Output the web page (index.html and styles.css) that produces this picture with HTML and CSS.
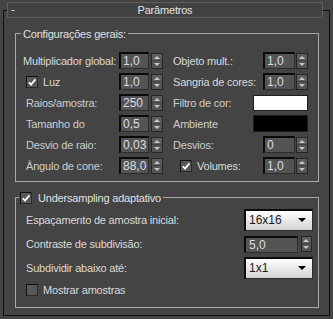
FILE: index.html
```html
<!DOCTYPE html>
<html lang="pt">
<head>
    <meta charset="UTF-8">
    <title>Parâmetros</title>
    <link rel="stylesheet" href="styles.css">
</head>
<body>
    <div class="rollout">
        <div class="rollout-head">
            <span class="collapse">-</span>
            <span class="title">Parâmetros</span>
        </div>

        <div class="group general">
            <div class="legend">Configurações gerais:</div>
            <div class="cols">
                <div class="col">
                    <div class="row first"><span class="lbl">Multiplicador global:</span><span class="num">1,0</span><span class="spin"></span></div>
                    <div class="row"><span class="check on"><svg viewBox="0 0 10 10"><path d="M1.8 5.2 L4 7.6 L8.4 2.4"/></svg></span><span class="lbl">Luz</span><span class="num">1,0</span><span class="spin"></span></div>
                    <div class="row"><span class="lbl dim">Raios/amostra:</span><span class="num">250</span><span class="spin"></span></div>
                    <div class="row"><span class="lbl dim">Tamanho do</span><span class="num">0,5</span><span class="spin"></span></div>
                    <div class="row"><span class="lbl dim">Desvio de raio:</span><span class="num">0,03</span><span class="spin"></span></div>
                    <div class="row"><span class="lbl dim">Ângulo de cone:</span><span class="num">88,0</span><span class="spin"></span></div>
                </div>
                <div class="col right">
                    <div class="row"><span class="lbl">Objeto mult.:</span><span class="num">1,0</span><span class="spin"></span></div>
                    <div class="row"><span class="lbl">Sangria de cores:</span><span class="num">1,0</span><span class="spin"></span></div>
                    <div class="row"><span class="lbl dim">Filtro de cor:</span><span class="swatch white"></span></div>
                    <div class="row"><span class="lbl dim">Ambiente</span><span class="swatch black"></span></div>
                    <div class="row"><span class="lbl dim">Desvios:</span><span class="num">0</span><span class="spin"></span></div>
                    <div class="row"><span class="check on vol"><svg viewBox="0 0 10 10"><path d="M1.8 5.2 L4 7.6 L8.4 2.4"/></svg></span><span class="lbl">Volumes:</span><span class="num">1,0</span><span class="spin"></span></div>
                </div>
            </div>
        </div>

        <div class="group adaptive">
            <div class="legend with-check"><span class="check on"><svg viewBox="0 0 10 10"><path d="M1.8 5.2 L4 7.6 L8.4 2.4"/></svg></span>Undersampling adaptativo</div>
            <div class="rows">
                <div class="arow"><span class="lbl">Espaçamento de amostra inicial:</span><span class="ctl"><span class="drop">16x16</span></span></div>
                <div class="arow"><span class="lbl">Contraste de subdivisão:</span><span class="ctl"><span class="num wide">5,0</span><span class="spin thin"></span></span></div>
                <div class="arow"><span class="lbl">Subdividir abaixo até:</span><span class="ctl"><span class="drop">1x1</span></span></div>
                <div class="arow last"><span class="check"></span><span class="lbl">Mostrar amostras</span></div>
            </div>
        </div>
    </div>
</body>
</html>
```

FILE: styles.css
```css
body {
    margin: 0;
    background-color: #444444;
    font-family: "Liberation Sans", Arial, sans-serif;
    font-size: 11px;
    letter-spacing: -0.2px;
    color: #dadada;
}
.rollout {
    width: 327px;
    box-sizing: border-box;
    margin: 10px 0 0 3px;
    padding: 0 10px 7px 11px;
    border: 1px solid #0e0e0e;
}
.rollout-head {
    position: relative;
    display: flex;
    align-items: center;
    justify-content: center;
    height: 16px;
    box-sizing: border-box;
    margin: -9px -4px 0 -8px;
    border: 1px solid #5e5e5e;
    background-color: #424242;
    color: #e2e2e2;
}
.collapse {
    position: absolute;
    left: 3px;
    top: 0;
    line-height: 13px;
}
.title {
    line-height: 14px;
}
.group {
    margin-top: 15px;
    border: 1px solid #a8a8a8;
}
.legend {
    width: max-content;
    height: 14px;
    line-height: 14px;
    margin: -7px 0 0 5px;
    padding: 0 2px;
    background-color: #444444;
    color: #e0e0e0;
}
.legend.with-check {
    display: flex;
    align-items: center;
    margin-left: 3px;
    padding: 0 2px 0 1px;
}
.legend.with-check .check {
    margin-right: 6px;
}
.cols {
    display: grid;
    grid-template-columns: 140px 135px;
    column-gap: 10px;
    margin-top: 9px;
    padding: 0 0 5px 7px;
}
.row {
    display: flex;
    align-items: center;
    height: 21px;
}
.lbl {
    flex: 1;
    white-space: nowrap;
}
.col .row .lbl {
    padding-left: 3px;
}
.col .row.first .lbl,
.col.right .row .lbl {
    padding-left: 0;
}
.col .row .check + .lbl {
    padding-left: 0;
}
.dim {
    color: #cdcdcd;
}
.num {
    width: 30px;
    height: 17px;
    box-sizing: border-box;
    padding: 1px 0 0 2px;
    line-height: 13px;
    font-size: 12px;
    letter-spacing: 0;
    border-top: 2px solid #0a0a0a;
    border-left: 2px solid #0a0a0a;
    border-right: 1px solid #2c2c2c;
    border-bottom: 1px solid #2c2c2c;
    background-color: #545454;
    color: #d8dce4;
}
.col.right .num {
    width: 32px;
}
.spin {
    position: relative;
    width: 12px;
    height: 16px;
    box-sizing: border-box;
    margin-left: 2px;
    border: 1px solid #262626;
    background: linear-gradient(#5c5c5c 0, #5c5c5c 6px, #444444 6px, #444444 7px, #545454 7px);
}
.col.right .spin {
    margin-left: 1px;
}
.spin::before,
.spin::after {
    content: "";
    position: absolute;
    left: 2px;
    border-left: 3px solid transparent;
    border-right: 3px solid transparent;
}
.spin::before {
    top: 2px;
    border-bottom: 3px solid #c8c8c8;
}
.spin::after {
    bottom: 2px;
    border-top: 3px solid #c8c8c8;
}
.spin.thin {
    width: 11px;
    margin-left: 3px;
}
.spin.thin::before,
.spin.thin::after {
    left: 1px;
}
.swatch {
    width: 55px;
    height: 16px;
    box-sizing: border-box;
    border: 1px solid #1e1e1e;
}
.swatch.white {
    background-color: #ffffff;
}
.swatch.black {
    background-color: #000000;
    height: 17px;
}
.check {
    display: inline-flex;
    width: 12px;
    height: 12px;
    box-sizing: border-box;
    margin: 0 5px 0 3px;
    border-top: 1px solid #111111;
    border-left: 1px solid #111111;
    border-right: 1px solid #2a2a2a;
    border-bottom: 1px solid #2a2a2a;
    background-color: #585858;
}
.check svg {
    width: 10px;
    height: 10px;
}
.check path {
    fill: none;
    stroke: #ffffff;
    stroke-width: 1.7;
}
.check.vol {
    margin-left: 7px;
}
.legend.with-check .check {
    margin-left: 0;
}
.rows {
    margin-top: 3px;
    padding: 0 5px 7px 10px;
}
.arow {
    display: flex;
    align-items: center;
    height: 24px;
}
.arow.last {
    height: 20px;
}
.arow.last .check {
    margin-left: 0;
}
.ctl {
    display: flex;
    align-items: center;
    width: 69px;
}
.num.wide {
    width: 54px;
    padding-left: 3px;
}
.drop {
    position: relative;
    width: 69px;
    height: 22px;
    box-sizing: border-box;
    padding: 2px 0 0 3px;
    line-height: 15px;
    font-size: 12px;
    letter-spacing: 0;
    border-top: 2px solid #0a0a0a;
    border-left: 2px solid #0a0a0a;
    border-right: 1px solid #2a2a2a;
    border-bottom: 1px solid #2a2a2a;
    background: linear-gradient(#ffffff, #d2d2d2);
    color: #1a1a1a;
}
.drop::after {
    content: "";
    position: absolute;
    right: 6px;
    top: 7px;
    border-left: 4px solid transparent;
    border-right: 4px solid transparent;
    border-top: 4px solid #000000;
}
```
